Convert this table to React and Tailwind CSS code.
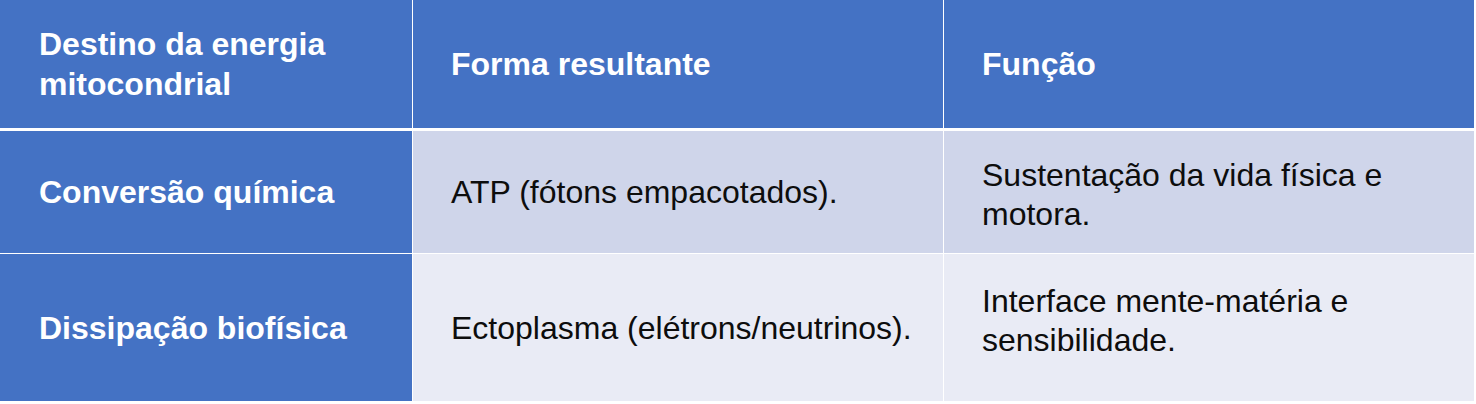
export default function App() {
  return (
    <div className="w-[1476px] h-[404px] bg-white font-['Liberation_Sans',Arial,sans-serif]">
      <div className="flex flex-col w-[1474px]">
        <div className="flex gap-px h-[128px]">
          <div className="w-[412px] bg-[#4472c4] flex items-center pl-[39px] pr-4 text-white font-bold text-[32px] leading-[40px]">
            <div>Destino da energia<br />mitocondrial</div>
          </div>
          <div className="w-[530px] bg-[#4472c4] flex items-center pl-[38px] text-white font-bold text-[32px] leading-[40px]">
            Forma resultante
          </div>
          <div className="w-[530px] bg-[#4472c4] flex items-center pl-[38px] text-white font-bold text-[32px] leading-[40px]">
            Função
          </div>
        </div>
        <div className="flex gap-px h-[122px] mt-[3px]">
          <div className="w-[412px] bg-[#4472c4] flex items-center pl-[39px] text-white font-bold text-[32px] leading-[40px]">
            Conversão química
          </div>
          <div className="w-[530px] bg-[#cfd5ea] flex items-center pl-[38px] text-[#0d0d0d] text-[32px] leading-[40px]">
            ATP (fótons empacotados).
          </div>
          <div className="w-[530px] bg-[#cfd5ea] flex items-center pl-[38px] pt-[6px] text-[#0d0d0d] text-[32px] leading-[39px]">
            <div>Sustentação da vida física e<br />motora.</div>
          </div>
        </div>
        <div className="flex gap-px h-[147px] mt-px">
          <div className="w-[412px] bg-[#4472c4] flex items-center pl-[39px] text-white font-bold text-[32px] leading-[40px]">
            Dissipação biofísica
          </div>
          <div className="w-[530px] bg-[#e9ebf5] flex items-center pl-[38px] text-[#0d0d0d] text-[32px] leading-[40px]">
            Ectoplasma (elétrons/neutrinos).
          </div>
          <div className="w-[530px] bg-[#e9ebf5] flex items-center pl-[38px] pb-[14px] text-[#0d0d0d] text-[32px] leading-[39px]">
            <div>Interface mente-matéria e<br />sensibilidade.</div>
          </div>
        </div>
      </div>
    </div>
  );
}
